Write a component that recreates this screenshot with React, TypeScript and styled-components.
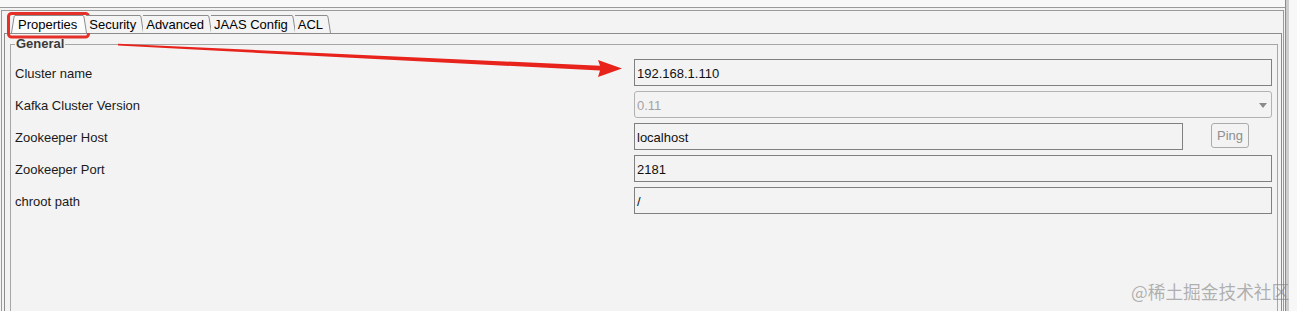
import React from 'react';
import styled, { createGlobalStyle } from 'styled-components';

const GlobalStyle = createGlobalStyle`
  html, body {
    margin: 0;
    padding: 0;
    background: #f3f3f3;
  }
  body {
    font-family: "Liberation Sans", Arial, sans-serif;
    font-size: 13px;
    color: #000;
  }
`;

const Screen = styled.div`
  position: relative;
  display: flex;
  width: 1297px;
  height: 311px;
  overflow: hidden;
  background: #f3f3f3;
`;

const Window = styled.div`
  box-sizing: border-box;
  width: 1286px;
  display: flex;
  flex-direction: column;
  border-right: 1px solid #8c8c8c;
`;

const ScrollEdge = styled.div`
  width: 3px;
  background: #cdcdcd;
`;

const SidePane = styled.div`
  flex: 1;
  background: #f7f7f7;
`;

const TopBar = styled.div`
  height: 7px;
  background: #f8f8f8;
  border-bottom: 1px solid #9a9a9a;
`;

const Frame = styled.div`
  flex: 1;
  display: flex;
  flex-direction: column;
  margin: 2px 1px 0 1px;
  padding: 0 1px 0 2px;
  border: 1px solid #9a9a9a;
  border-bottom: none;
  min-height: 0;
`;

const TabStrip = styled.div`
  display: flex;
  align-items: flex-end;
  height: 22px;
  padding-left: 7px;
`;

const TabItem = styled.div<{ $selected?: boolean }>`
  position: relative;
  z-index: ${({ $selected }) => ($selected ? 2 : 1)};
  display: flex;
  height: 18px;
  & + & {
    margin-left: -1px;
  }
`;

const TabLabel = styled.div<{ $selected?: boolean }>`
  padding: ${({ $selected }) => ($selected ? '0 6px 0 3px' : '0 4px 0 3px')};
  line-height: 17px;
  border-top: 1px solid #8c8c8c;
  background: ${({ $selected }) => ($selected ? '#fcfcfc' : '#f4f4f4')};
  white-space: nowrap;
`;

const Panel = styled.div`
  flex: 1;
  min-height: 0;
  padding: 3px 3px 0 5px;
  border: 1px solid #8c8c8c;
  border-bottom: none;
`;

const Group = styled.fieldset`
  margin: 0;
  height: 320px;
  padding: 8px 5px 0 4px;
  border: 1px solid #a6a6a6;
`;

const GroupTitle = styled.legend`
  padding: 0 1px;
  font-weight: bold;
  line-height: 14px;
  color: #3a3a3a;
`;

const Form = styled.div`
  display: grid;
  grid-template-columns: 619px 1fr;
  grid-auto-rows: 27px;
  row-gap: 5px;
`;

const Label = styled.div`
  display: flex;
  align-items: center;
  padding-top: 2px;
  color: #1a1a1a;
`;

const FieldRow = styled.div`
  display: flex;
  align-items: flex-start;
  gap: 28px;
`;

const TextField = styled.div<{ $width?: number }>`
  box-sizing: border-box;
  ${({ $width }) => ($width ? `width: ${$width}px;` : 'width: 100%;')}
  height: 27px;
  display: flex;
  align-items: center;
  padding: 1px 2px 0;
  border: 1px solid #808080;
  color: #111;
`;

const Combo = styled.div`
  box-sizing: border-box;
  height: 27px;
  display: flex;
  align-items: center;
  justify-content: space-between;
  padding: 1px 4px 0 2px;
  border: 1px solid #b2b2b2;
  border-radius: 3px;
  color: #a3a3a3;
`;

const PingButton = styled.div`
  box-sizing: border-box;
  width: 38px;
  height: 25px;
  display: flex;
  align-items: center;
  justify-content: center;
  border: 1px solid #ababab;
  border-radius: 3px;
  color: #8f8f8f;
`;

const Overlay = styled.svg`
  position: absolute;
  left: 0;
  top: 0;
  pointer-events: none;
`;

const Watermark = styled.span`
  position: absolute;
  left: 1131px;
  top: 279px;
  font-family: "Noto Sans CJK SC", "Noto Sans", sans-serif;
  font-size: 17.7px;
  line-height: 24px;
  color: rgba(130, 130, 130, 0.6);
  white-space: nowrap;
`;

function LeftEdge({ fill }: { fill: string }) {
  return (
    <svg width="4" height="18" viewBox="0 0 4 18">
      <polygon points="0,18 3,2 4,0 4,18" fill={fill} />
      <path d="M0.5 18 L3 2.2 Q3.3 0.5 4 0.5" stroke="#8c8c8c" fill="none" />
    </svg>
  );
}

function RightEdge({ fill }: { fill: string }) {
  return (
    <svg width="4" height="18" viewBox="0 0 4 18">
      <polygon points="0,0 1,2 4,18 0,18" fill={fill} />
      <path d="M0 0.5 Q0.7 0.5 1 2.2 L3.5 18" stroke="#8c8c8c" fill="none" />
    </svg>
  );
}

const tabs = ['Properties', 'Security', 'Advanced', 'JAAS Config', 'ACL'];

function Tab({ title, selected, first }: { title: string; selected?: boolean; first?: boolean }) {
  const fill = selected ? '#fcfcfc' : '#f4f4f4';
  return (
    <TabItem $selected={selected}>
      {(selected || first) && <LeftEdge fill={fill} />}
      <TabLabel $selected={selected}>{title}</TabLabel>
      <RightEdge fill={fill} />
    </TabItem>
  );
}

export default function App() {
  return (
    <>
      <GlobalStyle />
      <Screen>
        <Window>
          <TopBar />
          <Frame>
            <TabStrip>
              {tabs.map((t, i) => (
                <Tab key={t} title={t} selected={i === 0} first={i === 0} />
              ))}
            </TabStrip>
            <Panel>
              <Group>
                <GroupTitle>General</GroupTitle>
                <Form>
                  <Label>Cluster name</Label>
                  <TextField>192.168.1.110</TextField>

                  <Label>Kafka Cluster Version</Label>
                  <Combo>
                    <span>0.11</span>
                    <svg width="8" height="5" viewBox="0 0 8 5">
                      <polygon points="0,0 8,0 4,5" fill="#8a8a8a" />
                    </svg>
                  </Combo>

                  <Label>Zookeeper Host</Label>
                  <FieldRow>
                    <TextField $width={549}>localhost</TextField>
                    <PingButton>Ping</PingButton>
                  </FieldRow>

                  <Label>Zookeeper Port</Label>
                  <TextField>2181</TextField>

                  <Label>chroot path</Label>
                  <TextField>/</TextField>
                </Form>
              </Group>
            </Panel>
          </Frame>
        </Window>
        <ScrollEdge />
        <SidePane />

        <Overlay width="1297" height="311" viewBox="0 0 1297 311">
          <rect x="8.5" y="13.5" width="80" height="23.5" rx="3" fill="none" stroke="#e5302a" strokeWidth="3" />
          <polygon
            points="118,43.8 600,65.8 598,60 622,68.5 598,77 600,70.6 118,45.6"
            fill="#e8231c"
          />
        </Overlay>
        <Watermark>@稀土掘金技术社区</Watermark>
      </Screen>
    </>
  );
}
